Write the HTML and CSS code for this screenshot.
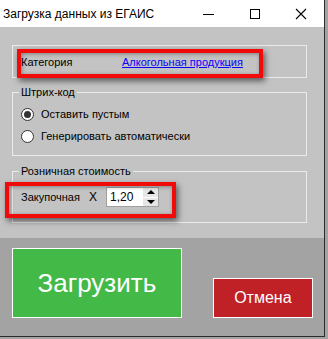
FILE: index.html
```html
<!DOCTYPE html>
<html lang="ru">
<head>
    <meta charset="UTF-8">
    <title>Загрузка данных из ЕГАИС</title>
    <link rel="stylesheet" href="styles.css">
</head>
<body>
    <div class="window">
        <div class="titlebar">
            <span class="title">Загрузка данных из ЕГАИС</span>
            <span class="caption-btn">
                <svg width="12" height="12" viewBox="0 0 12 12"><path d="M0 6.5h11" stroke="#000" stroke-width="1"/></svg>
            </span>
            <span class="caption-btn">
                <svg width="12" height="12" viewBox="0 0 12 12"><rect x="1.5" y="1.5" width="9" height="9" fill="none" stroke="#000" stroke-width="1"/></svg>
            </span>
            <span class="caption-btn">
                <svg width="12" height="12" viewBox="0 0 12 12"><path d="M1 1l10 10M11 1L1 11" stroke="#000" stroke-width="1.1"/></svg>
            </span>
        </div>

        <div class="content">
            <fieldset class="group group-category">
                <div class="row">
                    <span class="label">Категория</span>
                    <a class="link" href="#">Алкогольная продукция</a>
                </div>
                <div class="mark mark-category"></div>
            </fieldset>

            <fieldset class="group group-barcode">
                <legend>Штрих-код</legend>
                <label class="radio-row">
                    <span class="radio checked"></span>
                    Оставить пустым
                </label>
                <label class="radio-row">
                    <span class="radio"></span>
                    Генерировать автоматически
                </label>
            </fieldset>

            <fieldset class="group group-price">
                <legend>Розничная стоимость</legend>
                <div class="row">
                    <span class="label">Закупочная</span>
                    <span class="times">X</span>
                    <span class="spin">
                        <span class="spin-value">1,20</span>
                        <span class="spin-buttons">
                            <span class="spin-btn"><span class="arrow-up"></span></span>
                            <span class="spin-btn"><span class="arrow-down"></span></span>
                        </span>
                    </span>
                </div>
                <div class="mark mark-price"></div>
            </fieldset>
        </div>

        <div class="actions">
            <button class="btn btn-load">Загрузить</button>
            <button class="btn btn-cancel">Отмена</button>
        </div>
    </div>
</body>
</html>
```

FILE: styles.css
```css
body {
    margin: 0;
    width: 328px;
    height: 339px;
    background: #a3a3a3;
    font-family: "Liberation Sans", Arial, sans-serif;
    overflow: hidden;
}

.window {
    width: 324px;
    height: 336px;
    border-right: 1px solid #2b2b2b;
    border-bottom: 1px solid #2b2b2b;
    display: flex;
    flex-direction: column;
    background: #c3c3c3;
}

/* title bar */
.titlebar {
    height: 27px;
    background: #fff;
    display: flex;
    align-items: center;
    font-size: 12px;
    color: #000;
}

.title {
    padding-left: 3px;
    flex: 1;
}

.caption-btn {
    width: 46px;
    height: 27px;
    display: flex;
    align-items: center;
    justify-content: center;
}

/* groups */
.content {
    padding: 18px 0 0 12px;
    height: 193px;
    position: relative;
}

.group {
    position: relative;
    box-sizing: border-box;
    width: 295px;
    margin: 0;
    padding: 0 8px;
    border: 1px solid #ebebeb;
    font-size: 11px;
    color: #000;
}

.group legend {
    padding: 0 2px;
    margin-left: -2px;
    font-size: 11px;
    line-height: 14px;
}

.group-category {
    height: 33px;
}

.group-category .row {
    height: 31px;
}

.group-barcode {
    margin-top: 7px;
    height: 71px;
    padding-top: 4px;
}

.group-price {
    margin-top: 8px;
    height: 59px;
    padding-top: 2px;
}

.row {
    display: flex;
    align-items: center;
}

.label {
    width: 101px;
}

.link {
    color: #0b00ff;
    text-decoration: underline;
}

.radio-row {
    display: flex;
    align-items: center;
    height: 22px;
    gap: 7px;
}

.radio {
    width: 11px;
    height: 11px;
    border: 1px solid #333;
    border-radius: 50%;
    background: #fff;
    display: flex;
    align-items: center;
    justify-content: center;
}

.radio.checked::after {
    content: "";
    width: 7px;
    height: 7px;
    border-radius: 50%;
    background: #333;
}

.group-price .row {
    height: 34px;
}

.group-price .label {
    width: 68px;
}

.times {
    width: 17px;
    font-size: 12px;
}

.spin {
    display: flex;
    height: 18px;
    border: 1px solid #a0a0a0;
    background: #fff;
}

.spin-value {
    width: 33px;
    padding-left: 3px;
    line-height: 18px;
    font-size: 12px;
}

.spin-buttons {
    width: 15px;
    display: flex;
    flex-direction: column;
    gap: 1px;
    background: #fff;
}

.spin-btn {
    flex: 1;
    background: #e6e6e6;
    display: flex;
    align-items: center;
    justify-content: center;
}

.arrow-up {
    border-left: 4px solid transparent;
    border-right: 4px solid transparent;
    border-bottom: 4px solid #000;
}

.arrow-down {
    border-left: 4px solid transparent;
    border-right: 4px solid transparent;
    border-top: 4px solid #000;
}

/* red annotation frames */
.mark {
    position: absolute;
    border: 4px solid #f00a0a;
    box-shadow: 2px 3px 6px rgba(0, 0, 0, 0.55), inset 1px 1px 4px rgba(0, 0, 0, 0.35);
    pointer-events: none;
}

.mark-category {
    left: 4px;
    top: 3px;
    width: 238px;
    height: 21px;
}

.mark-price {
    left: -8px;
    top: 4px;
    width: 163px;
    height: 28px;
}

/* bottom buttons */
.actions {
    flex: 1;
    background: #a3a3a3;
    display: flex;
    align-items: flex-end;
    gap: 31px;
    padding: 0 11px 18px 12px;
}

.btn {
    border: 1px solid #fff;
    color: #fff;
    font-family: "Liberation Sans", Arial, sans-serif;
    padding: 0;
}

.btn-load {
    width: 171px;
    height: 70px;
    background: #43b947;
    font-size: 26px;
}

.btn-cancel {
    width: 101px;
    height: 40px;
    background: #c02126;
    font-size: 16px;
}
```
